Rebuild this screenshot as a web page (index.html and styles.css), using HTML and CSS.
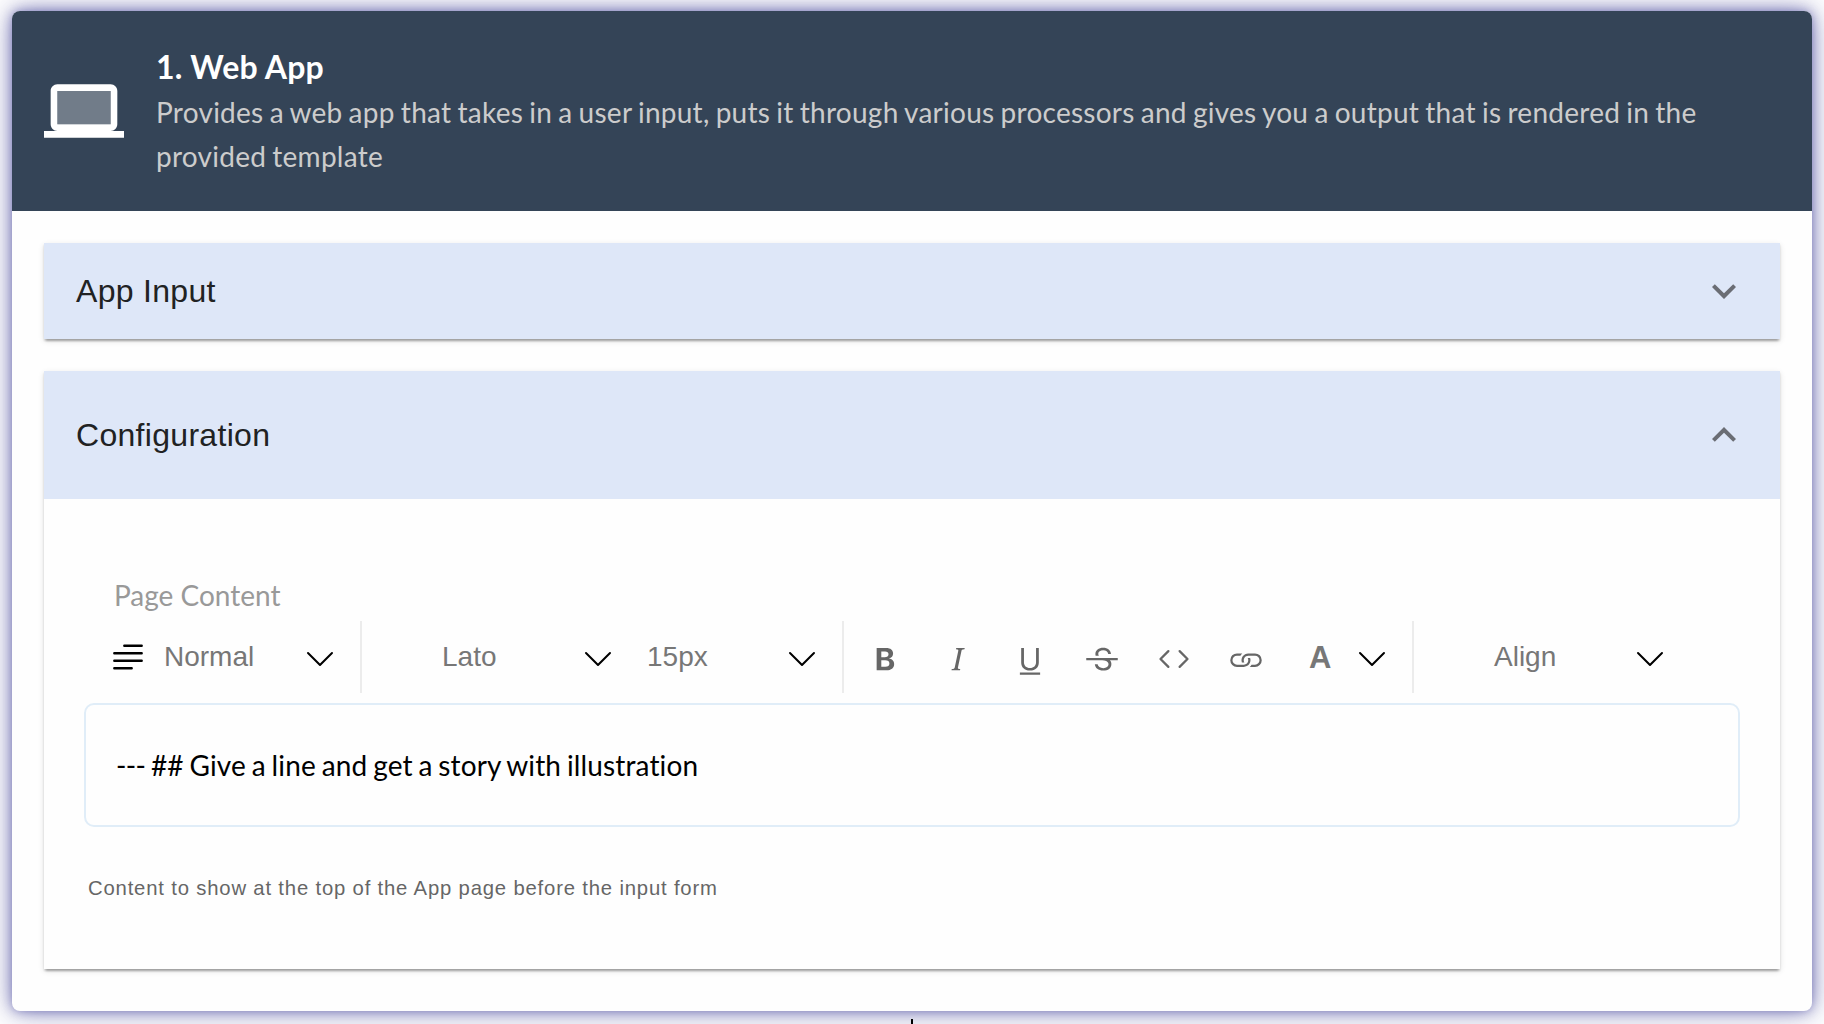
FILE: index.html
```html
<!DOCTYPE html>
<html lang="en">
<head>
<meta charset="utf-8">
<title>Web App</title>
<link rel="stylesheet" href="styles.css">
</head>
<body>
<svg width="0" height="0" class="defs">
  <symbol id="chev" viewBox="0 0 16 16"><path fill-rule="evenodd" d="M1.646 4.646a.5.5 0 0 1 .708 0L8 10.293l5.646-5.647a.5.5 0 0 1 .708.708l-6 6a.5.5 0 0 1-.708 0l-6-6a.5.5 0 0 1 0-.708z"/></symbol>
  <symbol id="expand" viewBox="0 0 24 24"><path d="M16.59 8.59 12 13.17 7.41 8.59 6 10l6 6 6-6z"/></symbol>
</svg>
<main class="card">
  <header class="head">
    <svg class="laptop" viewBox="0 0 24 24"><path d="M4 6h16v10H4z" opacity=".3"/><path d="M20 18c1.1 0 1.99-.9 1.99-2L22 6c0-1.1-.9-2-2-2H4c-1.1 0-2 .9-2 2v10c0 1.1.9 2 2 2H0v2h24v-2h-4zM4 6h16v10H4V6z"/></svg>
    <div class="head-text">
      <h1 class="title">1. Web App</h1>
      <p class="desc">Provides a web app that takes in a user input, puts it through various processors and gives you a output that is rendered in the provided template</p>
    </div>
  </header>
  <div class="body">
    <section class="panel">
      <div class="summary"><span class="summary-label">App Input</span><svg class="expand"><use href="#expand"/></svg></div>
    </section>
    <section class="panel panel-open">
      <div class="summary summary-open"><span class="summary-label">Configuration</span><svg class="expand up"><use href="#expand"/></svg></div>
      <div class="details">
        <div class="label">Page Content</div>
        <div class="toolbar">
          <div class="group block-group">
            <svg class="para" viewBox="0 0 30 26"><path d="M11.3 1.7h17.4M1.3 9.2h27.4M1.3 16.7h27.4M1.3 24.2h17.4"/></svg>
            <span class="select">Normal</span>
            <svg class="chev"><use href="#chev"/></svg>
          </div>
          <div class="group font-group">
            <span class="select select-font">Lato</span>
            <svg class="chev"><use href="#chev"/></svg>
            <span class="select select-size">15px</span>
            <svg class="chev"><use href="#chev"/></svg>
          </div>
          <div class="group format-group">
            <svg class="tool" viewBox="0 0 16 16"><path d="M8.21 13c2.106 0 3.412-1.087 3.412-2.823 0-1.306-.984-2.283-2.324-2.386v-.055a2.176 2.176 0 0 0 1.852-2.14c0-1.51-1.162-2.46-3.014-2.46H3.843V13H8.21zM5.908 4.674h1.696c.963 0 1.517.451 1.517 1.244 0 .834-.629 1.32-1.73 1.32H5.908V4.673zm0 6.788V8.598h1.73c1.217 0 1.88.492 1.88 1.415 0 .943-.643 1.449-1.832 1.449H5.907z"/></svg>
            <svg class="tool" viewBox="0 0 16 16"><path d="M7.991 11.674 9.53 4.455c.123-.595.246-.71 1.347-.807l.11-.52H7.211l-.11.52c1.06.096 1.128.212 1.005.807L6.57 11.674c-.123.595-.246.71-1.346.806l-.11.52h3.774l.11-.52c-1.06-.095-1.129-.211-1.006-.806z"/></svg>
            <svg class="tool" viewBox="0 0 16 16"><path d="M5.313 3.136h-1.23V9.54c0 2.105 1.47 3.623 3.917 3.623s3.917-1.518 3.917-3.623V3.136h-1.23v6.323c0 1.49-.978 2.57-2.687 2.57-1.709 0-2.687-1.08-2.687-2.57V3.136zM12.5 15h-9v-1h9v1z"/></svg>
            <svg class="tool" viewBox="0 0 16 16"><path d="M6.333 5.686c0 .31.083.581.27.814H5.166a2.776 2.776 0 0 1-.099-.76c0-1.627 1.436-2.768 3.48-2.768 1.969 0 3.39 1.175 3.445 2.85h-1.23c-.11-1.08-.964-1.743-2.25-1.743-1.23 0-2.18.602-2.18 1.607zm2.194 7.478c-2.153 0-3.589-1.107-3.705-2.81h1.23c.144 1.06 1.129 1.703 2.544 1.703 1.34 0 2.31-.705 2.31-1.675 0-.827-.547-1.374-1.914-1.675L8.046 8.5H1v-1h14v1h-3.504c.468.437.675.994.675 1.697 0 1.826-1.436 2.967-3.644 2.967z"/></svg>
            <svg class="tool" viewBox="0 0 16 16"><path d="M5.854 4.854a.5.5 0 1 0-.708-.708l-3.5 3.5a.5.5 0 0 0 0 .708l3.5 3.5a.5.5 0 0 0 .708-.708L2.707 8l3.147-3.146zm4.292 0a.5.5 0 0 1 .708-.708l3.5 3.5a.5.5 0 0 1 0 .708l-3.5 3.5a.5.5 0 0 1-.708-.708L13.293 8l-3.147-3.146z"/></svg>
            <svg class="tool" viewBox="0 0 16 16"><path d="M6.354 5.5H4a3 3 0 0 0 0 6h3a3 3 0 0 0 2.83-4H9c-.086 0-.17.01-.25.031A2 2 0 0 1 7 10.5H4a2 2 0 1 1 0-4h1.535c.218-.376.495-.714.82-1z"/><path d="M9 5.5a3 3 0 0 0-2.83 4h1.098A2 2 0 0 1 9 6.5h3a2 2 0 1 1 0 4h-1.535a4.02 4.02 0 0 1-.82 1H12a3 3 0 1 0 0-6H9z"/></svg>
            <span class="color-a">A</span>
            <svg class="chev"><use href="#chev"/></svg>
          </div>
          <div class="group align-group">
            <span class="select select-align">Align</span>
            <svg class="chev"><use href="#chev"/></svg>
          </div>
        </div>
        <div class="editor"><span class="rule">---</span> ## Give a line and get a story with illustration</div>
        <p class="helper">Content to show at the top of the App page before the input form</p>
      </div>
    </section>
  </div>
  <div class="connector"></div>
</main>
</body>
</html>
```
FILE: styles.css
```css
* { box-sizing: border-box; }
body {
  margin: 0;
  padding: 11px 12px 13px;
  height: 1024px;
  overflow: hidden;
  background: #fff;
  font-family: Lato, sans-serif;
}
h1, p { margin: 0; }
svg { display: block; flex: none; }
.defs { position: absolute; }
.card {
  position: relative;
  height: 1000px;
  border-radius: 8px;
  background: #fefefe;
  box-shadow: 0 0 10px rgba(50, 50, 150, .42), 0 0 28px rgba(50, 50, 140, .62);
}
.head {
  display: flex;
  gap: 32px;
  height: 200px;
  padding: 32px;
  align-items: center;
  border-radius: 8px 8px 0 0;
  background: #344457;
}
.laptop { width: 80px; height: 80px; fill: #fff; }
.head-text { flex: 1; padding-bottom: 2px; }
.title { font-size: 32px; line-height: 47px; font-weight: 700; letter-spacing: .2px; color: #fff; }
.desc { font-size: 28px; line-height: 44px; color: #ccc; letter-spacing: .26px; word-spacing: -1.27px; }
.body { display: flex; flex-direction: column; gap: 32px; padding: 32px; }
.panel {
  background: #fefefe;
  box-shadow: 0 4px 2px -2px rgba(0, 0, 0, .2), 0 2px 2px rgba(0, 0, 0, .14), 0 2px 6px rgba(0, 0, 0, .12);
}
.panel-open { height: 598px; }
.summary {
  display: flex;
  align-items: center;
  justify-content: space-between;
  height: 96px;
  padding: 0 32px;
  background: #dee7f8;
}
.summary-open { height: 128px; }
.summary-label {
  font: 32px/48px "Liberation Sans", sans-serif;
  letter-spacing: .3px;
  color: #212223;
}
.expand { width: 48px; height: 48px; fill: #6a6d74; }
.up { transform: rotate(180deg); }
.details { padding: 74px 40px 0; }
.label { padding-left: 30px; font-size: 28px; line-height: 44px; color: #999; }
.toolbar { display: flex; height: 72px; margin-top: 4px; }
.group { display: flex; align-items: center; border-right: 2px solid #ececec; }
.block-group { width: 278px; padding-left: 29px; }
.font-group { width: 482px; padding-left: 80px; }
.format-group { width: 570px; padding: 4px 0 0 24px; gap: 36px; }
.align-group { border: 0; padding-left: 80px; }
.para { width: 30px; height: 26px; fill: none; stroke: #000; stroke-width: 2.4; stroke-linecap: round; margin-right: 21px; }
.chev { width: 32px; height: 32px; fill: #000; margin-top: 3px; }
.select { width: 140px; font: 28px/40px "Liberation Sans", sans-serif; color: #777; }
.select-size { width: 139px; margin-left: 33px; }
.tool { width: 36px; height: 36px; fill: #666; }
.color-a { width: 22px; margin: -3px -23px 0 9px; font: 700 31px/40px "Liberation Sans", sans-serif; color: #777; }
.format-group .chev { margin: 0 0 0 12px; }
.editor {
  height: 124px;
  margin-top: 10px;
  padding: 37px 30px;
  border: 2px solid #e0edf8;
  border-radius: 10px;
  font-size: 28px;
  line-height: 46px;
  font-variant-ligatures: none;
  letter-spacing: .14px;
  word-spacing: -1.5px;
  color: #000;
}
.rule { letter-spacing: -.7px; }
.helper {
  padding: 45px 4px 0;
  font: 20.3px/32px "Liberation Sans", sans-serif;
  letter-spacing: .82px;
  color: #666;
}
.connector { position: absolute; left: 899px; top: 1008px; width: 2px; height: 5px; background: #000; }
```
